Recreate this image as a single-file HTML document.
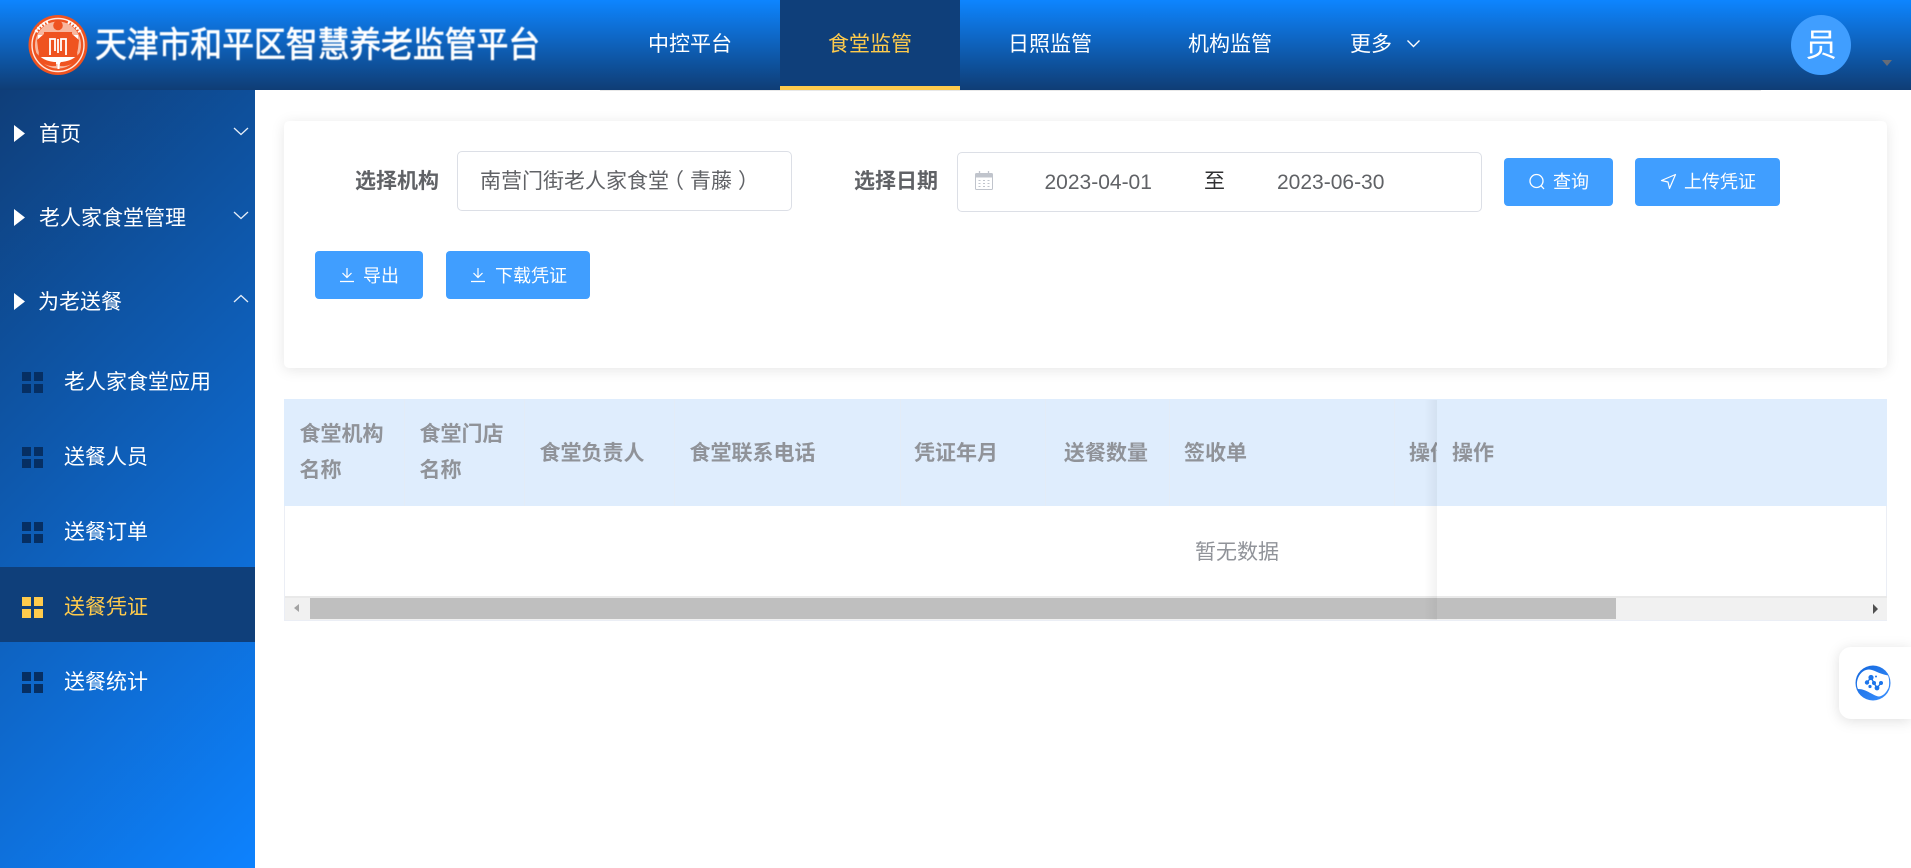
<!DOCTYPE html>
<html lang="zh-CN">
<head>
<meta charset="utf-8">
<title>天津市和平区智慧养老监管平台</title>
<style>
*{box-sizing:border-box;margin:0;padding:0}
html,body{width:1911px;height:868px;overflow:hidden;background:#fff;font-family:"Liberation Sans","Noto Sans CJK SC",sans-serif}
.a{position:absolute;white-space:nowrap}
.t{position:absolute;white-space:nowrap;height:40px;line-height:40px;font-size:21px}
#header{position:absolute;left:0;top:0;width:1911px;height:90px;background:linear-gradient(180deg,#0d85ff 0%,#0f3d75 100%)}
#side{position:absolute;left:0;top:90px;width:255px;height:778px;background:linear-gradient(135deg,#0f3e79 0%,#0d82fe 100%)}
.w{color:#fff}
.b{color:#606266;font-weight:700}
.h{color:#909399;font-weight:700}
.btn{position:absolute;background:#409eff;border-radius:4px;height:48px}
.bt{position:absolute;white-space:nowrap;color:#fff;font-size:18px;height:30px;line-height:30px}
.grid{position:absolute;width:21px;height:21px}
.grid i{position:absolute;width:9px;height:9px;background:#062f63}
.grid i:nth-child(1){left:0;top:0}.grid i:nth-child(2){left:12px;top:0}.grid i:nth-child(3){left:0;top:12px}.grid i:nth-child(4){left:12px;top:12px}
.grid.y i{background:#ffcb4c}
.sep{position:absolute;top:399px;width:1px;height:107px;background:#e3ecf7}
</style>
</head>
<body>
<div id="header"></div>
<div class="a" style="left:600px;top:90px;width:1161px;height:1px;background:#e8e8e8"></div>

<!-- logo -->
<svg class="a" style="left:28px;top:15px;filter:blur(.3px)" width="60" height="60" viewBox="0 0 60 60">
<ellipse cx="30" cy="30" rx="29.500" ry="30" fill="#ef5320"/>
<ellipse cx="30" cy="30" rx="26" ry="26.500" fill="none" stroke="#ffe9df" stroke-width="1.400"/>
<ellipse cx="30" cy="30" rx="23" ry="23.500" fill="#f8b79e"/>
<path d="M8 17 C11 12 15 9 20 7 M40 7 C45 9 49 12 52 17" stroke="#fff" stroke-width="3.500" stroke-dasharray="2 1.500" fill="none"/>
<path d="M10 38 C14 45 22 49 30 49 C38 49 46 45 50 38 L50 20 L10 20 Z" fill="#fff"/>
<circle cx="30" cy="10.500" r="4.800" fill="#ef5320"/>
<path d="M16 17 H44 V42 H16 Z" fill="#ef5320"/>
<path d="M9 25 L16 19 V42 H11 Z M51 25 L44 19 V42 H49 Z" fill="#ef5320"/>
<path d="M22 40 V24 H27 V36 M33 36 V24 H38 V40 M30 24 V38" stroke="#fff" stroke-width="1.800" fill="none"/>
<path d="M7 36 C12 44 21 47 28 47 L28 51 C18 52 10 47 7 36 Z M53 36 C48 44 39 47 32 47 L32 51 C42 52 50 47 53 36 Z" fill="#ef5320"/>
<path d="M26 44 H35 L31.500 49 V54 H29.500 V49 Z" fill="#fff"/>
</svg>
<div class="a" style="left:95px;top:23px;height:44px;line-height:44px;font-size:31.800px;font-weight:400;color:#fff;-webkit-text-stroke:.7px #fff;filter:blur(.4px);transform:scaleY(1.1);transform-origin:0 50%">天津市和平区智慧养老监管平台</div>

<!-- nav -->
<div class="a" style="left:780px;top:0;width:180px;height:90px;background:#0f3f7a;border-bottom:4px solid #ffcb4c"></div>
<div class="t w" style="left:648px;top:25px">中控平台</div>
<div class="t" style="left:828px;top:25px;color:#ffcb4c">食堂监管</div>
<div class="t w" style="left:1008px;top:25px">日照监管</div>
<div class="t w" style="left:1188px;top:25px">机构监管</div>
<div class="t w" style="left:1350px;top:25px">更多</div>
<svg class="a" style="left:1406px;top:39px" width="15" height="10" viewBox="0 0 15 10"><path d="M1.500 1.500 L7.500 7.500 L13.500 1.500" stroke="#fff" stroke-width="1.400" fill="none"/></svg>
<div class="a" style="left:1791px;top:15px;width:60px;height:60px;border-radius:50%;background:#409eff;color:#fff;font-size:32px;line-height:60px;text-align:center">员</div>
<div class="a" style="left:1882px;top:60px;width:0;height:0;border-left:5.500px solid transparent;border-right:5.500px solid transparent;border-top:6px solid #666c78"></div>

<!-- sidebar -->
<div id="side"></div>
<div class="a" style="left:0;top:567px;width:255px;height:75px;background:#0f3f7a"></div>

<svg class="a" style="left:14px;top:125px" width="12" height="18" viewBox="0 0 12 18"><path d="M0 0 L11 8.500 L0 17 Z" fill="#fff"/></svg>
<svg class="a" style="left:14px;top:209px" width="12" height="18" viewBox="0 0 12 18"><path d="M0 0 L11 8.500 L0 17 Z" fill="#fff"/></svg>
<svg class="a" style="left:14px;top:293px" width="12" height="18" viewBox="0 0 12 18"><path d="M0 0 L11 8.500 L0 17 Z" fill="#fff"/></svg>
<div class="t w" style="left:39px;top:115px">首页</div>
<div class="t w" style="left:39px;top:199px">老人家食堂管理</div>
<div class="t w" style="left:38px;top:283px">为老送餐</div>
<svg class="a" style="left:233px;top:127px" width="16" height="9" viewBox="0 0 16 9"><path d="M1 1 L8 7.500 L15 1" stroke="#e6eef8" stroke-width="1.300" fill="none"/></svg>
<svg class="a" style="left:233px;top:211px" width="16" height="9" viewBox="0 0 16 9"><path d="M1 1 L8 7.500 L15 1" stroke="#e6eef8" stroke-width="1.300" fill="none"/></svg>
<svg class="a" style="left:233px;top:294px" width="16" height="9" viewBox="0 0 16 9"><path d="M1 8 L8 1.500 L15 8" stroke="#e6eef8" stroke-width="1.300" fill="none"/></svg>

<div class="grid" style="left:22px;top:372px"><i></i><i></i><i></i><i></i></div>
<div class="grid" style="left:22px;top:447px"><i></i><i></i><i></i><i></i></div>
<div class="grid" style="left:22px;top:522px"><i></i><i></i><i></i><i></i></div>
<div class="grid y" style="left:22px;top:597px"><i></i><i></i><i></i><i></i></div>
<div class="grid" style="left:22px;top:672px"><i></i><i></i><i></i><i></i></div>
<div class="t w" style="left:64px;top:363px">老人家食堂应用</div>
<div class="t w" style="left:64px;top:438px">送餐人员</div>
<div class="t w" style="left:64px;top:513px">送餐订单</div>
<div class="t" style="left:64px;top:588px;color:#ffcb4c">送餐凭证</div>
<div class="t w" style="left:64px;top:663px">送餐统计</div>

<!-- card -->
<div class="a" style="left:284px;top:121px;width:1603px;height:247px;background:#fff;border-radius:5px;box-shadow:0 2px 14px rgba(0,0,0,.1)"></div>
<div class="t b" style="left:355px;top:162px">选择机构</div>
<div class="a" style="left:457px;top:151px;width:335px;height:60px;border:1px solid #dcdfe6;border-radius:5px"></div>
<div class="t" style="left:480px;top:162px;color:#606266">南营门街老人家食堂</div>
<div class="t" style="left:663px;top:162px;color:#606266">（</div>
<div class="t" style="left:690px;top:162px;color:#606266">青藤</div>
<div class="t" style="left:738px;top:162px;color:#606266">）</div>

<div class="t b" style="left:854px;top:162px">选择日期</div>
<div class="a" style="left:957px;top:152px;width:525px;height:60px;border:1px solid #dcdfe6;border-radius:5px"></div>
<svg class="a" style="left:975px;top:171px" width="18" height="19" viewBox="0 0 18 19"><rect x=".5" y="2.500" width="17" height="16" rx="1" fill="none" stroke="#c0c4cc"/><rect x="1" y="3" width="16" height="3.500" fill="#c0c4cc"/><path d="M4.500 0v4M13.500 0v4" stroke="#c0c4cc" stroke-width="1.300"/><path d="M3.500 9.500h2M8 9.500h2M12.500 9.500h2M3.500 12.500h2M8 12.500h2M12.500 12.500h2M3.500 15.500h2M8 15.500h2M12.500 15.500h2" stroke="#c0c4cc"/></svg>
<div class="t" style="left:1044.500px;top:163px;color:#606266">2023-04-01</div>
<div class="t" style="left:1204px;top:162px;color:#303133">至</div>
<div class="t" style="left:1277px;top:163px;color:#606266">2023-06-30</div>

<div class="btn" style="left:1504px;top:158px;width:109px"></div>
<svg class="a" style="left:1528px;top:173px" width="18" height="18" viewBox="0 0 18 18"><circle cx="8.500" cy="8" r="6.500" fill="none" stroke="#fff" stroke-width="1.300"/><path d="M13 12.700 L16 16" stroke="#fff" stroke-width="1.300"/></svg>
<div class="bt" style="left:1553px;top:167px">查询</div>
<div class="btn" style="left:1635px;top:158px;width:145px"></div>
<svg class="a" style="left:1660px;top:173px" width="17" height="17" viewBox="0 0 17 17"><path d="M15.500 1.500 L1.500 7.500 L8 9 L9.500 15.500 Z" fill="none" stroke="#fff" stroke-width="1.200" stroke-linejoin="round"/></svg>
<div class="bt" style="left:1684px;top:167px">上传凭证</div>

<div class="btn" style="left:315px;top:251px;width:108px"></div>
<svg class="a" style="left:339px;top:267px" width="16" height="16" viewBox="0 0 16 16"><path d="M8 1 V10 M3.500 6 L8 10.500 L12.500 6 M1 14.500 H15" stroke="#fff" stroke-width="1.200" fill="none"/></svg>
<div class="bt" style="left:363px;top:261px">导出</div>
<div class="btn" style="left:446px;top:251px;width:144px"></div>
<svg class="a" style="left:470px;top:267px" width="16" height="16" viewBox="0 0 16 16"><path d="M8 1 V10 M3.500 6 L8 10.500 L12.500 6 M1 14.500 H15" stroke="#fff" stroke-width="1.200" fill="none"/></svg>
<div class="bt" style="left:495px;top:261px">下载凭证</div>

<!-- table -->
<div class="a" style="left:284px;top:399px;width:1603px;height:222px;background:#fff;border:1px solid #ebeef5;border-top:0"></div>
<div class="a" style="left:284px;top:399px;width:1603px;height:107px;background:#dfedfd"></div>
<div class="sep" style="left:404px"></div>
<div class="sep" style="left:524px"></div>
<div class="sep" style="left:674px"></div>
<div class="sep" style="left:900px"></div>
<div class="sep" style="left:1045px"></div>
<div class="sep" style="left:1169px"></div>
<div class="sep" style="left:1394px"></div>
<div class="t h" style="left:299.500px;top:415px">食堂机构</div>
<div class="t h" style="left:299.500px;top:451px">名称</div>
<div class="t h" style="left:419.500px;top:415px">食堂门店</div>
<div class="t h" style="left:419.500px;top:451px">名称</div>
<div class="t h" style="left:539.500px;top:434px">食堂负责人</div>
<div class="t h" style="left:689.500px;top:434px">食堂联系电话</div>
<div class="t h" style="left:914px;top:434px">凭证年月</div>
<div class="t h" style="left:1064px;top:434px">送餐数量</div>
<div class="t h" style="left:1184px;top:434px">签收单</div>
<div class="a" style="left:1409px;top:434px;width:28px;height:40px;overflow:hidden"><div class="t h" style="left:0;top:0">操作</div></div>
<div class="t" style="left:1195px;top:533px;color:#909399">暂无数据</div>

<!-- scrollbar -->
<div class="a" style="left:285px;top:596px;width:1602px;height:24px;background:#f1f1f1;border-top:2px solid #e9e9e9"></div>
<div class="a" style="left:310px;top:598px;width:1306px;height:21px;background:#bfbfbf"></div>
<div class="a" style="left:294px;top:604px;width:0;height:0;border-top:4.500px solid transparent;border-bottom:4.500px solid transparent;border-right:5px solid #a3a3a3"></div>
<div class="a" style="left:1873px;top:603.500px;width:0;height:0;border-top:5px solid transparent;border-bottom:5px solid transparent;border-left:5px solid #505050"></div>

<!-- fixed column shadow -->
<div class="a" style="left:1424px;top:400px;width:13px;height:220px;background:linear-gradient(90deg,rgba(0,0,0,0),rgba(0,0,0,.05))"></div>
<div class="a" style="left:1437px;top:399px;width:449px;height:107px;background:#dfedfd"></div>
<div class="t h" style="left:1452px;top:434px">操作</div>

<!-- floating -->
<div class="a" style="left:1839px;top:647px;width:72px;height:72px;background:#fff;border-radius:12px 0 0 12px;box-shadow:0 2px 14px rgba(0,0,0,.13)"></div>
<svg class="a" style="left:1855px;top:665px" width="36" height="36" viewBox="0 0 36 36">
<defs><linearGradient id="g" x1="0" y1="0" x2="1" y2="1"><stop offset="0" stop-color="#1266dc"/><stop offset="1" stop-color="#3a90ff"/></linearGradient></defs>
<circle cx="18" cy="18" r="17.500" fill="url(#g)"/>
<path d="M2 20 C1.500 12 7 4.500 14 4.500 C19 4.500 24 9 33 10.500 C34.500 14 34.500 20 33.500 23 C31 28 28 31 24 31.500 C18 31 12 24 3 24 C2.500 23 2 21.500 2 20 Z" fill="#fff"/>
<circle cx="12" cy="17.500" r="2.200" fill="#1c74ea"/><circle cx="16" cy="12.500" r="2.600" fill="#1c74ea"/><circle cx="19" cy="18" r="2" fill="#1c74ea"/><circle cx="22" cy="23" r="2.400" fill="#1c74ea"/><circle cx="26" cy="18" r="2" fill="#1c74ea"/><circle cx="15" cy="21.500" r="1.600" fill="#1c74ea"/><circle cx="21" cy="11.500" r="1" fill="#1c74ea"/>
<path d="M12 17.500 L16 12.500 L19 18 L22 23 L26 18" stroke="#1c74ea" stroke-width="1.400" fill="none"/>
</svg>
</body>
</html>
